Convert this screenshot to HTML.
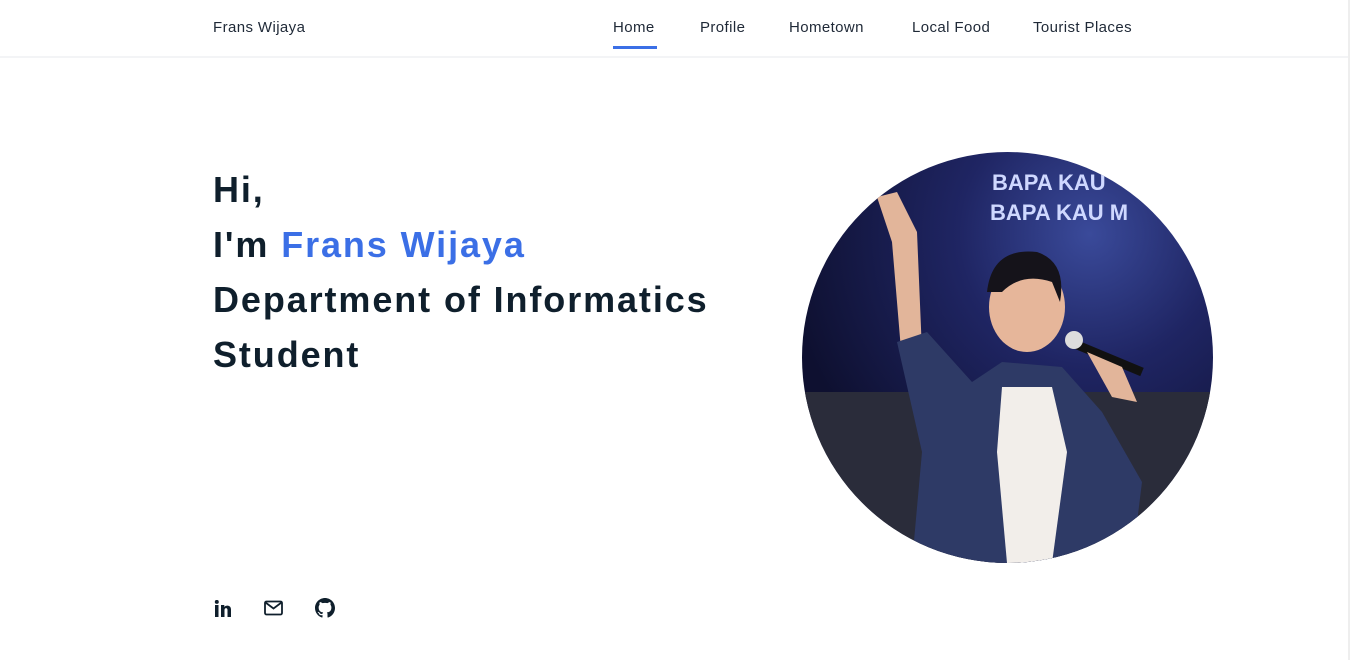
<!DOCTYPE html>
<html><head><meta charset="utf-8"><style>
*{margin:0;padding:0;box-sizing:border-box}
body{width:1350px;height:660px;background:#fff;font-family:"Liberation Sans",sans-serif;overflow:hidden;position:relative;color:#0f1f2c}
.nav{position:absolute;top:0;left:0;width:1348px;height:58px;border-bottom:2px solid #f3f4f6}
.brand{position:absolute;left:213px;top:19px;font-size:15px;letter-spacing:0.4px;color:#1f2937}
.nav a{position:absolute;top:19px;font-size:15px;letter-spacing:0.4px;color:#1f2937;text-decoration:none}
.ul{position:absolute;left:613px;top:46px;width:44px;height:3px;background:#3b6fe6}
h1{position:absolute;left:213px;top:162px;font-size:36px;line-height:55px;font-weight:bold;color:#0f1f2c;letter-spacing:1.9px}
h1 span{color:#3b6fe6}
.photo{position:absolute;left:802px;top:152px;width:411px;height:411px;border-radius:50%;overflow:hidden;
background:radial-gradient(circle at 70% 20%,#3a4a9a 0,#1f2563 30%,#0e1030 70%)}
.sb{position:absolute;right:0;top:0;width:2px;height:660px;background:#eee}
</style></head><body>
<div class="nav">
<div class="brand">Frans Wijaya</div>
<a style="left:613px">Home</a>
<a style="left:700px">Profile</a>
<a style="left:789px">Hometown</a>
<a style="left:912px">Local Food</a>
<a style="left:1033px">Tourist Places</a>
<div class="ul"></div>
</div>
<h1>Hi,<br>I'm <span>Frans Wijaya</span><br>Department of Informatics<br>Student</h1>
<div class="photo">
<svg width="411" height="411" viewBox="0 0 411 411">
<rect x="0" y="240" width="411" height="171" fill="#2a2c3a"/>
<text x="190" y="38" fill="#cfd8ff" font-family="Liberation Sans" font-weight="bold" font-size="22">BAPA KAU</text>
<text x="188" y="68" fill="#cfd8ff" font-family="Liberation Sans" font-weight="bold" font-size="22">BAPA KAU M</text>
<path d="M100 210 L90 90 L75 45 L95 40 L115 80 L120 200 Z" fill="#e2b59a"/>
<path d="M95 190 L125 180 L170 230 L200 210 L260 215 L300 260 L340 330 L330 411 L110 411 L120 300 Z" fill="#2e3a66"/>
<path d="M200 235 L250 235 L265 300 L250 411 L205 411 L195 300 Z" fill="#f2eeea"/>
<ellipse cx="225" cy="155" rx="38" ry="45" fill="#e6b69a"/>
<path d="M185 140 Q190 95 235 100 Q265 110 258 150 L250 130 Q220 120 200 140 Z" fill="#15131a"/>
<path d="M268 190 L340 220" stroke="#111" stroke-width="9"/>
<circle cx="272" cy="188" r="9" fill="#ddd"/>
<path d="M285 200 L320 215 L335 250 L310 245 Z" fill="#e2b59a"/>
</svg>
</div>
<svg style="position:absolute;left:214px;top:600px" width="20" height="18" viewBox="0 0 20 18"><rect x="1" y="5" width="3.5" height="12" fill="#0f1f2c"/><circle cx="2.8" cy="1.9" r="2" fill="#0f1f2c"/><path d="M7 5h3.3v2c1-2 6.7-2.5 6.7 2.5V17h-3.5v-7c0-2.6-3-2.4-3 0v7H7z" fill="#0f1f2c"/></svg>
<svg style="position:absolute;left:264px;top:600px" width="20" height="16" viewBox="0 0 20 16"><rect x="1" y="1.5" width="17" height="13" rx="1.5" fill="none" stroke="#0f1f2c" stroke-width="1.8"/><path d="M1.5 2.5l8 6 8-6" fill="none" stroke="#0f1f2c" stroke-width="1.8"/></svg>
<svg style="position:absolute;left:315px;top:598px" width="20" height="20" viewBox="0 0 16 16"><path fill="#0f1f2c" d="M8 0C3.58 0 0 3.58 0 8c0 3.54 2.29 6.530 5.47 7.59.4.07.55-.17.55-.38 0-.19-.01-.82-.01-1.49-2.01.37-2.53-.49-2.69-.94-.09-.23-.48-.94-.82-1.13-.28-.15-.68-.52-.01-.53.63-.01 1.08.58 1.23.82.72 1.21 1.87.87 2.33.66.07-.52.28-.87.51-1.07-1.78-.2-3.64-.89-3.64-3.95 0-.87.31-1.59.82-2.15-.08-.2-.36-1.02.08-2.12 0 0 .67-.21 2.2.82.64-.18 1.32-.27 2-.27.68 0 1.36.09 2 .27 1.530-1.04 2.2-.82 2.2-.82.44 1.1.16 1.92.08 2.12.51.56.82 1.27.82 2.15 0 3.07-1.87 3.75-3.65 3.95.29.25.54.73.54 1.48 0 1.07-.01 1.93-.01 2.2 0 .21.15.46.55.38A8.013 8.013 0 0016 8c0-4.42-3.58-8-8-8z"/></svg>
<div class="sb"></div>
</body></html>
